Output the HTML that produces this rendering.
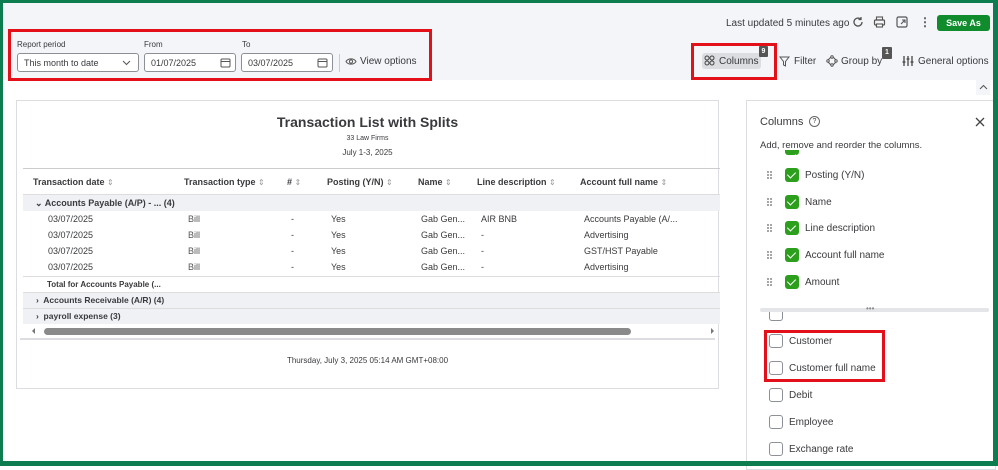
<!DOCTYPE html>
<html><head><meta charset="utf-8"><style>
*{box-sizing:border-box;margin:0;padding:0}
body{width:998px;height:466px;overflow:hidden;background:#fff;font-family:"Liberation Sans",sans-serif;color:#393a3d;position:relative}
.a{position:absolute}
.t{font-size:9px;white-space:nowrap}
.hd{font-size:9px;font-weight:bold;color:#393a3d;white-space:nowrap}
.hd i{font-style:normal;font-weight:normal;color:#999;font-size:8px}
.red{border:3px solid #e3101a}
.cb{position:absolute;width:14px;height:14px;border-radius:3px}
.on{background:#2ca01c}
.off{border:1px solid #8d9096;background:#fff}
.grip{position:absolute}
.lbl{position:absolute;font-size:10px;color:#393a3d;white-space:nowrap}
.cb.on::after{content:"";position:absolute;left:4px;top:2px;width:4px;height:7px;border-right:1.5px solid #fff;border-bottom:1.5px solid #fff;transform:rotate(45deg)}
</style></head><body>
<div class="a" style="left:0;top:0;width:998px;height:80px;background:#f4f5f8"></div>
<div class="a t" style="left:726px;top:18px;font-size:10px;color:#393a3d">Last updated 5 minutes ago</div>
<svg class="a" style="left:852px;top:16px" width="12" height="12" viewBox="0 0 12 12"><path d="M10 6a4 4 0 1 1-1.2-2.8M9 1v2.5H6.5" fill="none" stroke="#555" stroke-width="1.3"/></svg>
<svg class="a" style="left:873px;top:16px" width="13" height="12" viewBox="0 0 13 12"><rect x="1.5" y="4" width="10" height="5" rx="1" fill="none" stroke="#555" stroke-width="1.2"/><rect x="3.5" y="1" width="6" height="3" fill="none" stroke="#555" stroke-width="1.1"/><rect x="3.5" y="8" width="6" height="3" fill="#fff" stroke="#555" stroke-width="1.1"/></svg>
<svg class="a" style="left:896px;top:16px" width="12" height="12" viewBox="0 0 12 12"><rect x="1" y="1" width="10" height="10" rx="1.5" fill="none" stroke="#555" stroke-width="1.2"/><path d="M5 8l4-4M6 4h3v3" fill="none" stroke="#555" stroke-width="1.1"/></svg>
<div class="a t" style="left:919px;top:15px;font-size:12px;font-weight:bold;color:#555">⋮</div>
<div class="a" style="left:937px;top:15px;width:53px;height:16px;background:#108c2c;border-radius:3px;color:#fff;font-size:9px;font-weight:bold;text-align:center;line-height:16px">Save As</div>
<div class="a red" style="left:8px;top:29px;width:424px;height:52px"></div>
<div class="a t" style="left:17px;top:40px;font-size:8px">Report period</div>
<div class="a t" style="left:144px;top:40px;font-size:8px">From</div>
<div class="a t" style="left:242px;top:40px;font-size:8px">To</div>
<div class="a" style="left:17px;top:53px;width:122px;height:19px;border:1px solid #8d9096;border-radius:3px;background:#fff"><span class="t" style="position:absolute;left:6px;top:4px">This month to date</span><svg style="position:absolute;right:7px;top:6px" width="9" height="6"><path d="M1 1l3.5 3.5L8 1" fill="none" stroke="#555" stroke-width="1"/></svg></div>
<div class="a" style="left:144px;top:53px;width:92px;height:19px;border:1px solid #8d9096;border-radius:3px;background:#fff"><span class="t" style="position:absolute;left:6px;top:4px">01/07/2025</span><svg style="position:absolute;right:4px;top:3px" width="11" height="11"><rect x="1" y="2" width="9" height="8" rx="1" fill="none" stroke="#555"/><path d="M1 4.5h9" stroke="#555"/></svg></div>
<div class="a" style="left:241px;top:53px;width:92px;height:19px;border:1px solid #8d9096;border-radius:3px;background:#fff"><span class="t" style="position:absolute;left:6px;top:4px">03/07/2025</span><svg style="position:absolute;right:4px;top:3px" width="11" height="11"><rect x="1" y="2" width="9" height="8" rx="1" fill="none" stroke="#555"/><path d="M1 4.5h9" stroke="#555"/></svg></div>
<div class="a" style="left:339px;top:54px;width:1px;height:18px;background:#ccc"></div>
<svg class="a" style="left:345px;top:57px" width="12" height="9"><path d="M1 4.5C3 1 9 1 11 4.5C9 8 3 8 1 4.5Z" fill="none" stroke="#555"/><circle cx="6" cy="4.5" r="1.6" fill="none" stroke="#555"/></svg>
<div class="a t" style="left:360px;top:56px;font-size:10px">View options</div>
<div class="a red" style="left:691px;top:43px;width:86px;height:37px"></div>
<div class="a" style="left:702px;top:53px;width:59px;height:16px;background:#dcdde0;border-radius:3px"></div>
<svg class="a" style="left:704px;top:55px" width="11" height="11"><circle cx="3" cy="3" r="2" fill="none" stroke="#444"/><circle cx="8" cy="3" r="2" fill="none" stroke="#444"/><circle cx="3" cy="8" r="2" fill="none" stroke="#444"/><circle cx="8" cy="8" r="2" fill="none" stroke="#444"/></svg>
<div class="a t" style="left:719px;top:56px;font-size:10px">Columns</div>
<div class="a" style="left:759px;top:46px;width:9px;height:11px;background:#555;color:#fff;font-size:7px;font-weight:bold;text-align:center;line-height:11px;border-radius:1px">9</div>
<svg class="a" style="left:779px;top:56px" width="11" height="11"><path d="M1 1h9L6.5 5.5V10L4.5 9V5.5Z" fill="none" stroke="#555"/></svg>
<div class="a t" style="left:794px;top:56px;font-size:10px">Filter</div>
<svg class="a" style="left:826px;top:55px" width="12" height="12"><path d="M6 1L11 6L6 11L1 6Z" fill="none" stroke="#555"/><circle cx="6" cy="2" r="1.2" fill="#fff" stroke="#555"/><circle cx="6" cy="10" r="1.2" fill="#fff" stroke="#555"/><circle cx="2" cy="6" r="1.2" fill="#fff" stroke="#555"/><circle cx="10" cy="6" r="1.2" fill="#fff" stroke="#555"/></svg>
<div class="a t" style="left:841px;top:56px;font-size:10px">Group by</div>
<div class="a" style="left:882px;top:47px;width:10px;height:12px;background:#555;color:#fff;font-size:7px;font-weight:bold;text-align:center;line-height:12px;border-radius:1px">1</div>
<svg class="a" style="left:902px;top:55px" width="12" height="12"><path d="M2 1v10M6 1v10M10 1v10" stroke="#444" stroke-width="1.3"/><path d="M0.5 7h3M4.5 4h3M8.5 7h3" stroke="#444" stroke-width="1.3"/></svg>
<div class="a t" style="left:918px;top:56px;font-size:10px">General options</div>
<div class="a" style="left:976px;top:80px;width:14px;height:15px;background:#f4f5f8"></div>
<svg class="a" style="left:979px;top:84px" width="9" height="6"><path d="M1 5l3.5-3.5L8 5" fill="none" stroke="#555"/></svg>
<div class="a" style="left:16px;top:100px;width:703px;height:289px;border:1px solid #dcdde0"></div>
<div class="a" style="left:16px;top:114px;width:703px;text-align:center;font-size:14px;font-weight:bold;color:#393a3d">Transaction List with Splits</div>
<div class="a" style="left:16px;top:135px;width:703px;text-align:center;font-size:7px">33 Law Firms</div>
<div class="a" style="left:16px;top:148px;width:703px;text-align:center;font-size:8px">July 1-3, 2025</div>
<div class="a" style="left:23px;top:168px;width:697px;height:1px;background:#ccc"></div>
<div class="a hd" style="left:33px;top:177px">Transaction date <i>⇕</i></div>
<div class="a hd" style="left:184px;top:177px">Transaction type <i>⇕</i></div>
<div class="a hd" style="left:287px;top:177px"># <i>⇕</i></div>
<div class="a hd" style="left:327px;top:177px">Posting (Y/N) <i>⇕</i></div>
<div class="a hd" style="left:418px;top:177px">Name <i>⇕</i></div>
<div class="a hd" style="left:477px;top:177px">Line description <i>⇕</i></div>
<div class="a hd" style="left:580px;top:177px">Account full name <i>⇕</i></div>
<div class="a" style="left:23px;top:194px;width:697px;height:17px;background:#f0f1f4;border-top:1px solid #ddd"></div>
<div class="a hd" style="left:35px;top:198px">⌄ Accounts Payable (A/P) - ... (4)</div>
<div class="a" style="left:0;top:212px">
<div class="a t" style="left:48px;top:2px">03/07/2025</div><div class="a t" style="left:188px;top:2px;color:#555">Bill</div><div class="a t" style="left:291px;top:2px">-</div><div class="a t" style="left:331px;top:2px">Yes</div><div class="a t" style="left:421px;top:2px">Gab Gen...</div><div class="a t" style="left:481px;top:2px">AIR BNB</div><div class="a t" style="left:584px;top:2px">Accounts Payable (A/...</div>
<div class="a t" style="left:48px;top:18px">03/07/2025</div><div class="a t" style="left:188px;top:18px;color:#555">Bill</div><div class="a t" style="left:291px;top:18px">-</div><div class="a t" style="left:331px;top:18px">Yes</div><div class="a t" style="left:421px;top:18px">Gab Gen...</div><div class="a t" style="left:481px;top:18px">-</div><div class="a t" style="left:584px;top:18px">Advertising</div>
<div class="a t" style="left:48px;top:34px">03/07/2025</div><div class="a t" style="left:188px;top:34px;color:#555">Bill</div><div class="a t" style="left:291px;top:34px">-</div><div class="a t" style="left:331px;top:34px">Yes</div><div class="a t" style="left:421px;top:34px">Gab Gen...</div><div class="a t" style="left:481px;top:34px">-</div><div class="a t" style="left:584px;top:34px">GST/HST Payable</div>
<div class="a t" style="left:48px;top:50px">03/07/2025</div><div class="a t" style="left:188px;top:50px;color:#555">Bill</div><div class="a t" style="left:291px;top:50px">-</div><div class="a t" style="left:331px;top:50px">Yes</div><div class="a t" style="left:421px;top:50px">Gab Gen...</div><div class="a t" style="left:481px;top:50px">-</div><div class="a t" style="left:584px;top:50px">Advertising</div>
</div>
<div class="a" style="left:23px;top:276px;width:697px;height:1px;background:#ddd"></div>
<div class="a hd" style="left:47px;top:280px;font-size:8px">Total for Accounts Payable (...</div>
<div class="a" style="left:23px;top:292px;width:697px;height:16px;background:#f0f1f4;border-top:1px solid #ddd"></div>
<div class="a hd" style="left:36px;top:295px;font-size:8.5px">›&nbsp; Accounts Receivable (A/R) (4)</div>
<div class="a" style="left:23px;top:308px;width:697px;height:16px;background:#f0f1f4;border-top:1px solid #ddd"></div>
<div class="a hd" style="left:36px;top:311px;font-size:8.5px">›&nbsp; payroll expense (3)</div>
<div class="a" style="left:32px;top:328px;width:0;height:0;border-top:3px solid transparent;border-bottom:3px solid transparent;border-right:3px solid #777"></div>
<div class="a" style="left:44px;top:328px;width:587px;height:7px;background:#8a8a8a;border-radius:4px"></div>
<div class="a" style="left:711px;top:328px;width:0;height:0;border-top:3px solid transparent;border-bottom:3px solid transparent;border-left:3px solid #777"></div>
<div class="a" style="left:20px;top:338px;width:695px;height:2px;background:#dcdde0"></div>
<div class="a t" style="left:16px;top:356px;width:703px;text-align:center;font-size:8px">Thursday, July 3, 2025 05:14 AM GMT+08:00</div>
<div class="a" style="left:746px;top:100px;width:250px;height:370px;border:1px solid #dcdde0"></div>
<div class="a t" style="left:760px;top:116px;font-size:11px">Columns</div>
<div class="a" style="left:809px;top:116px;width:11px;height:11px;border:1px solid #666;border-radius:50%;font-size:7px;text-align:center;line-height:9px">?</div>
<svg class="a" style="left:975px;top:117px" width="10" height="10"><path d="M1 1l8 8M9 1l-8 8" stroke="#444" stroke-width="1.3"/></svg>
<div class="a t" style="left:760px;top:140px;font-size:9.5px">Add, remove and reorder the columns.</div>
<div class="cb on" style="left:785px;top:150px;height:5px;border-radius:0 0 3px 3px"></div>
<svg width="0" height="0" style="position:absolute"><defs><g id="g"><circle cx="1" cy="1" r="0.9" fill="#666"/><circle cx="4" cy="1" r="0.9" fill="#666"/><circle cx="1" cy="4" r="0.9" fill="#666"/><circle cx="4" cy="4" r="0.9" fill="#666"/><circle cx="1" cy="7" r="0.9" fill="#666"/><circle cx="4" cy="7" r="0.9" fill="#666"/></g></defs></svg>
<svg class="grip" style="left:767px;top:171px" width="6" height="9"><use href="#g"/></svg><div class="cb on" style="left:785px;top:168px"></div><div class="lbl" style="left:805px;top:170px">Posting (Y/N)</div>
<svg class="grip" style="left:767px;top:198px" width="6" height="9"><use href="#g"/></svg><div class="cb on" style="left:785px;top:195px"></div><div class="lbl" style="left:805px;top:197px">Name</div>
<svg class="grip" style="left:767px;top:224px" width="6" height="9"><use href="#g"/></svg><div class="cb on" style="left:785px;top:221px"></div><div class="lbl" style="left:805px;top:223px">Line description</div>
<svg class="grip" style="left:767px;top:251px" width="6" height="9"><use href="#g"/></svg><div class="cb on" style="left:785px;top:248px"></div><div class="lbl" style="left:805px;top:250px">Account full name</div>
<svg class="grip" style="left:767px;top:278px" width="6" height="9"><use href="#g"/></svg><div class="cb on" style="left:785px;top:275px"></div><div class="lbl" style="left:805px;top:277px">Amount</div>
<div class="a" style="left:760px;top:308px;width:229px;height:4px;background:#e4e5e8;border-radius:2px"></div>
<div class="a" style="left:866px;top:304px;font-size:8px;color:#888">•••</div>
<div class="cb off" style="left:769px;top:312px;height:9px;border-top:none;border-radius:0 0 3px 3px"></div>
<div class="a red" style="left:764px;top:330px;width:121px;height:52px"></div>
<div class="cb off" style="left:769px;top:334px"></div><div class="lbl" style="left:789px;top:336px">Customer</div>
<div class="cb off" style="left:769px;top:361px"></div><div class="lbl" style="left:789px;top:363px">Customer full name</div>
<div class="cb off" style="left:769px;top:388px"></div><div class="lbl" style="left:789px;top:390px">Debit</div>
<div class="cb off" style="left:769px;top:415px"></div><div class="lbl" style="left:789px;top:417px">Employee</div>
<div class="cb off" style="left:769px;top:442px"></div><div class="lbl" style="left:789px;top:444px">Exchange rate</div>
<div class="a" style="left:0;top:0;width:998px;height:466px;border:3px solid #0d7d4f;border-bottom-width:5px;border-right-width:5px"></div>
</body></html>
